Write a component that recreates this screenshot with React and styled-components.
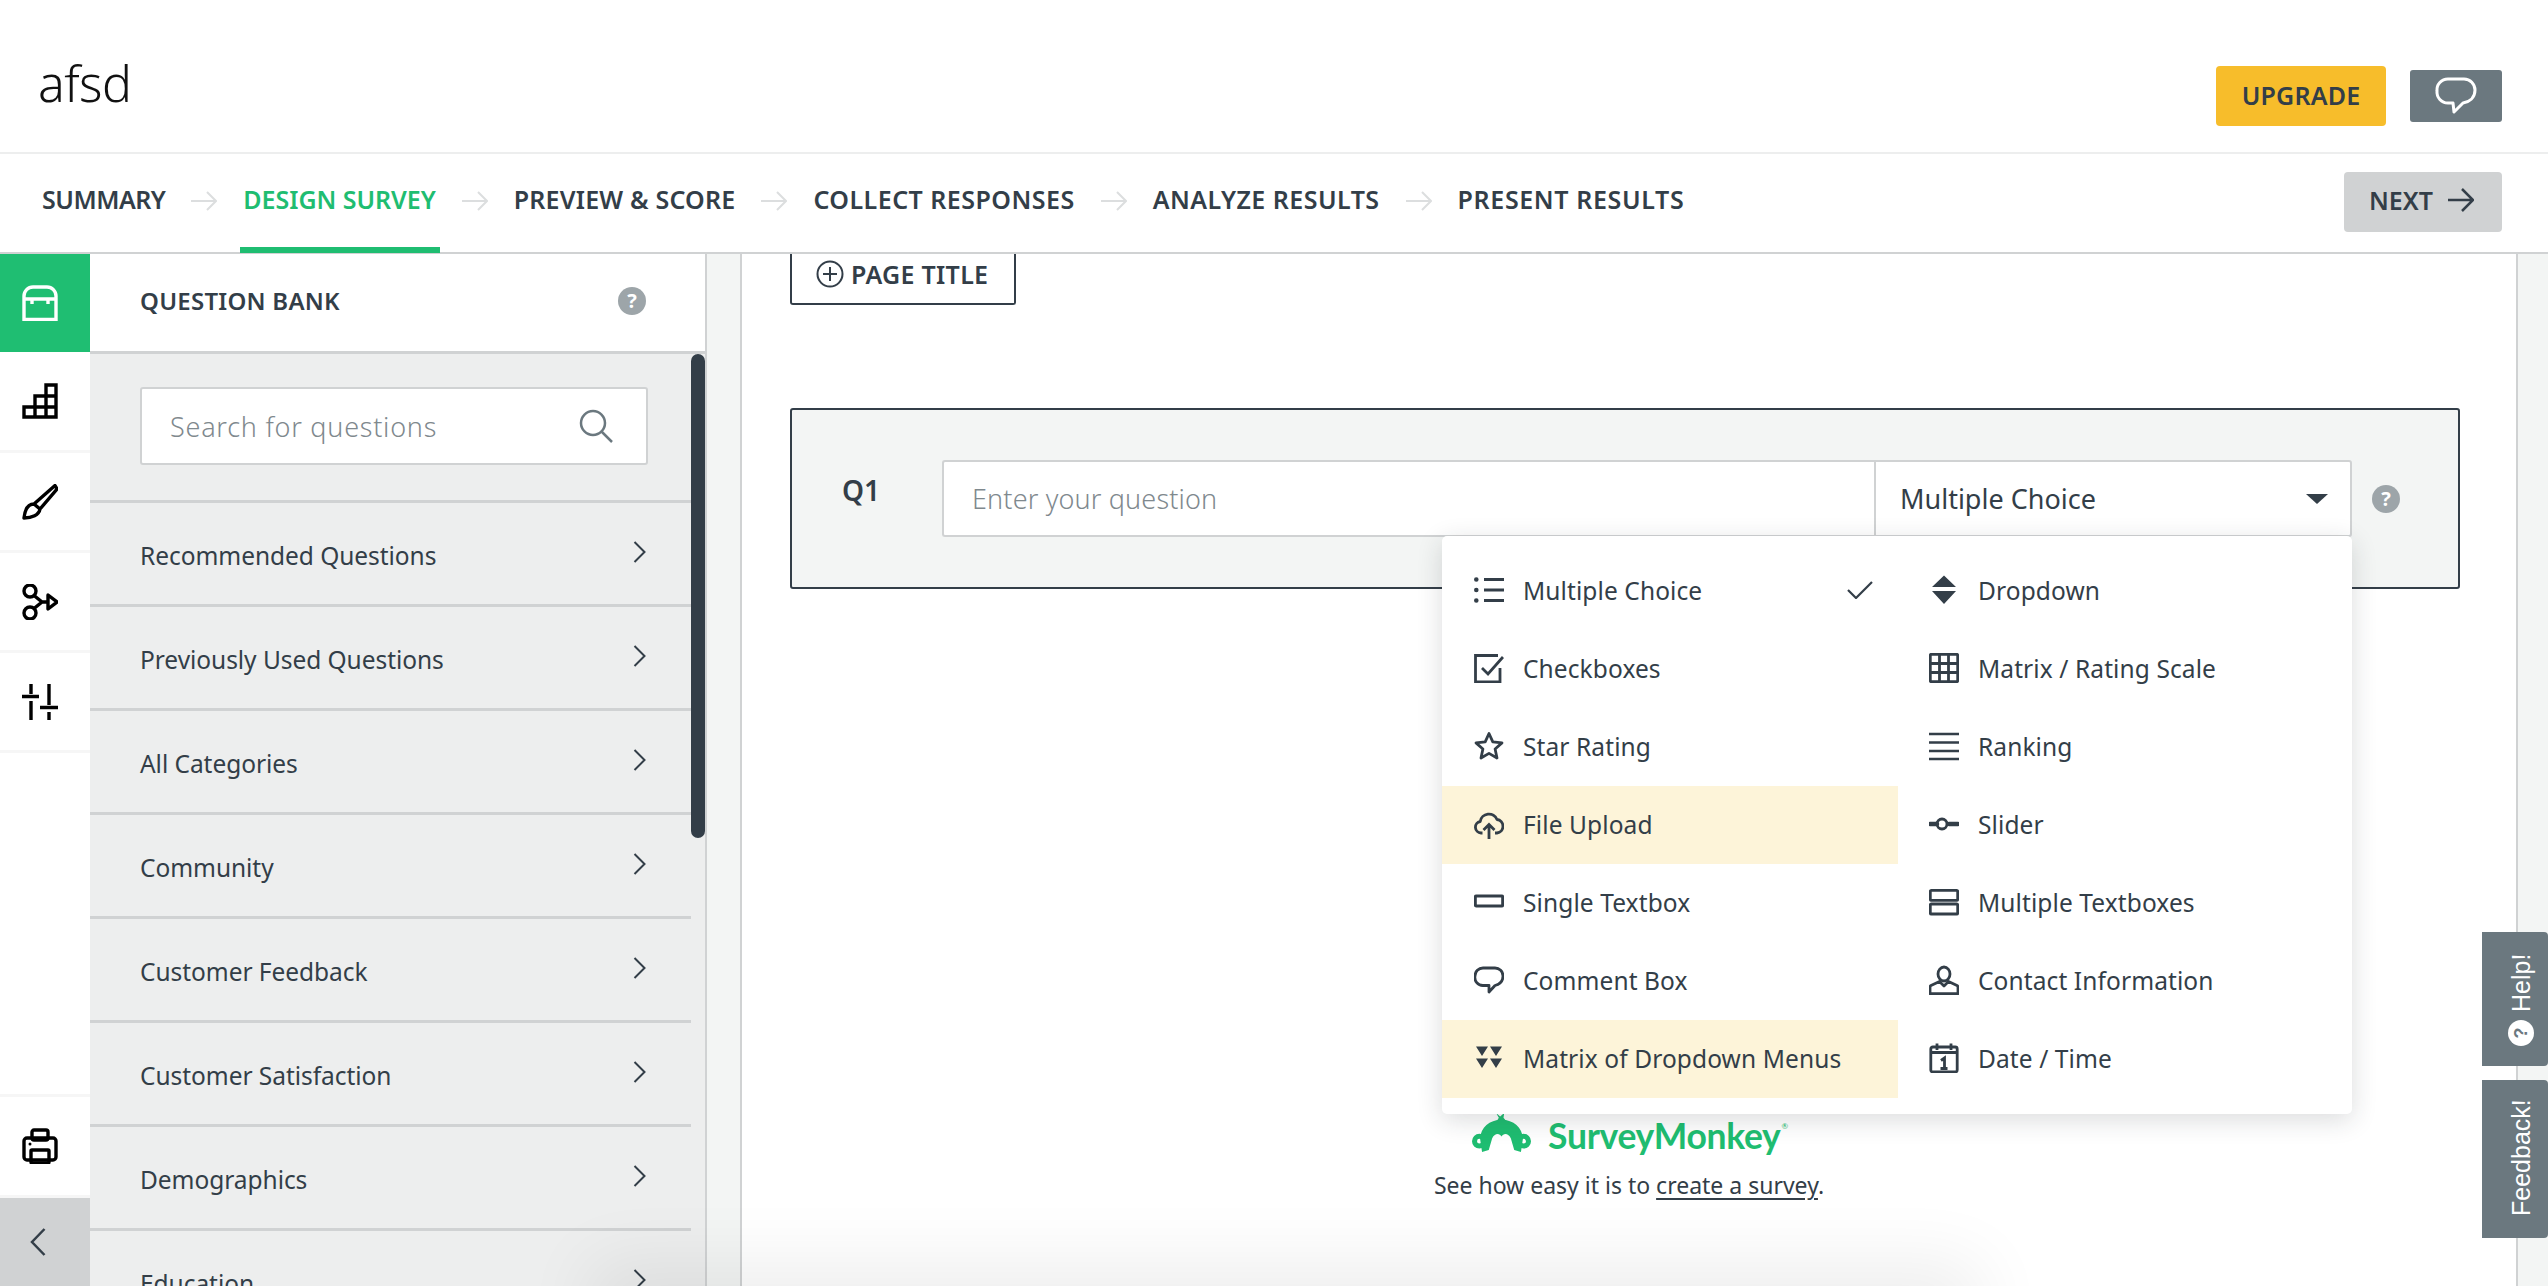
import React from "react";
import styled, { createGlobalStyle } from "styled-components";

const Global = createGlobalStyle`
  html, body { margin: 0; padding: 0; height: 100%; overflow: hidden; background: #fff; }
  * { box-sizing: border-box; }
  #root { height: 100%; }
`;
const INK = "#333e48";
const LINE = "#d0d2d3";
const SANS = `"Noto Sans", "Open Sans", sans-serif`;

const Page = styled.div`
  position: relative; width: 2548px; height: 1286px; overflow: hidden;
  display: flex; flex-direction: column; font-family: ${SANS}; color: ${INK}; background: #fff;
`;
const Header = styled.header`
  flex: none; height: 154px; border-bottom: 2px solid #edeeee;
  display: flex; align-items: flex-start; justify-content: space-between; padding: 0 46px 0 38px;
`;
const Title = styled.h1`
  margin: 50px 0 0; font-size: 50px; line-height: 66px; font-weight: 300; color: #111; letter-spacing: -0.6px;
`;
const HeaderActions = styled.div`
  display: flex; align-items: center; gap: 24px; margin-top: 66px;
`;
const UpgradeButton = styled.div`
  width: 170px; height: 60px; border-radius: 4px; background: #f7bd2b; color: ${INK};
  display: flex; align-items: center; justify-content: center; padding-bottom: 3px;
  font-size: 25px; font-weight: 600; letter-spacing: .2px;
`;
const ChatButton = styled.div`
  width: 92px; height: 52px; border-radius: 3px; background: #6b787f;
  display: flex; align-items: center; justify-content: center;
`;
const Nav = styled.nav`
  position: relative; flex: none; height: 100px; border-bottom: 2px solid ${LINE};
  display: flex; align-items: center; padding: 0 46px 0 42px;
`;
const Step = styled.div`
  position: relative; font-size: 25px; font-weight: 600; line-height: 36px; white-space: nowrap;
  color: ${p => (p.$active ? "#1fbd71" : INK)}; letter-spacing: ${p => p.$ls};
  margin-top: -9px;
  &::after {
    content: ""; display: ${p => (p.$active ? "block" : "none")}; position: absolute;
    left: -3px; right: -4px; bottom: -36px; height: 6px; background: #1fbd71;
  }
`;
const StepArrow = styled.svg`
  flex: none; width: 26px; height: 20px; margin: -5px 26px 0 26px; fill: none; stroke: #dcdedf; stroke-width: 2;
`;
const NextButton = styled.div`
  margin-left: auto; width: 158px; height: 60px; border-radius: 4px; background: ${LINE};
  display: flex; align-items: center; gap: 15px; padding: 0 0 5px 25px; margin-top: -2px;
  font-size: 25px; font-weight: 600;
`;
const Body = styled.div`
  flex: 1; min-height: 0; display: flex;
`;
const Rail = styled.aside`
  flex: none; width: 90px; display: flex; flex-direction: column; background: #fff;
`;
const RailItem = styled.div`
  flex: none; height: ${p => p.$h || "100px"}; display: flex; align-items: center; padding-left: 22px;
  background: ${p => (p.$active ? "#1fbe72" : "#fff")};
  border-bottom: ${p => (p.$active ? "none" : "3px solid #f6f6f6")};
`;
const RailSpacer = styled.div`
  flex: 1; border-bottom: 3px solid #f6f6f6;
`;
const Collapse = styled.div`
  flex: none; height: 88px; background: ${LINE}; display: flex; align-items: center; padding: 0 0 0 30px;
`;
const Bank = styled.section`
  flex: none; width: 617px; border-right: 2px solid ${LINE}; background: #edeeee;
  display: flex; flex-direction: column; position: relative; overflow: hidden;
`;
const BankHead = styled.div`
  flex: none; height: 100px; background: #fff; border-bottom: 3px solid ${LINE};
  display: flex; align-items: center; justify-content: space-between; padding: 0 59px 4px 50px;
  font-size: 24px; font-weight: 600; letter-spacing: .25px;
`;
const HelpDot = styled.span`
  width: 28px; height: 28px; border-radius: 50%; background: ${p => p.$bg || "#9da5a9"}; color: ${p => p.$fg || "#fff"};
  display: inline-flex; align-items: center; justify-content: center; flex: none;
  font-size: 20px; font-weight: 700; line-height: 1; letter-spacing: 0;
`;
const SearchWrap = styled.div`
  flex: none; height: 149px; padding: 33px 44px 0 50px; margin-right: 14px; border-bottom: 3px solid ${LINE};
`;
const SearchField = styled.div`
  height: 78px; width: 508px; background: #fff; border: 2px solid ${LINE}; border-radius: 3px;
  display: flex; align-items: center; justify-content: space-between; padding: 0 33px 0 28px;
  font-size: 27px; font-weight: 300; color: #7f898e; letter-spacing: .75px;
`;
const BankRow = styled.div`
  flex: none; height: 104px; margin-right: 14px; padding: 0 45px 0 50px; border-bottom: 3px solid ${LINE};
  display: flex; align-items: center; justify-content: space-between;
  font-size: 24.500px; font-weight: 400; color: ${INK}; letter-spacing: -.05px;
`;
const RowLabel = styled.span`
  margin-top: 4px;
`;
const RowChevron = styled.span`
  display: flex; margin-top: -3px;
`;
const Scrollbar = styled.div`
  position: absolute; top: 100px; right: 0; width: 14px; height: 484px; border-radius: 7px; background: ${INK};
`;
const Gutter = styled.div`
  flex: none; width: ${p => p.$w}; background: #f3f5f4;
  border-right: ${p => (p.$right ? `2px solid ${LINE}` : "none")};
  border-left: ${p => (p.$left ? `2px solid ${LINE}` : "none")};
`;
const Canvas = styled.main`
  flex: 1; min-width: 0; padding: 0 56px 0 48px; background: #fff;
`;
const PageTitle = styled.div`
  width: 226px; height: 51px; border: 2px solid ${INK}; border-top: none; border-radius: 0 0 3px 3px;
  display: flex; align-items: center; gap: 7px; padding: 0 0 10px 24px;
  font-size: 25px; font-weight: 600; letter-spacing: .3px;
`;
const QuestionCard = styled.div`
  position: relative; margin-top: 103px; height: 181px; background: #f3f5f4;
  border: 2px solid ${INK}; border-radius: 3px; display: flex; align-items: center; padding: 0 0 0 50px;
`;
const QLabel = styled.div`
  width: 100px; font-size: 28px; font-weight: 600; margin-top: -18px;
`;
const QuestionInput = styled.div`
  width: 932px; height: 77px; background: #fff; border: 2px solid ${LINE}; border-right: none; border-radius: 3px 0 0 3px;
  display: flex; align-items: center; padding-left: 28px; font-size: 27px; font-weight: 300; color: #7f898e; letter-spacing: .15px;
`;
const TypeSelect = styled.div`
  width: 478px; height: 77px; background: #fff; border: 2px solid ${LINE}; border-radius: 0 3px 3px 0;
  display: flex; align-items: center; justify-content: space-between; padding: 0 22px 0 24px; font-size: 27px;
`;
const Caret = styled.span`
  width: 0; height: 0; border-left: 11px solid transparent; border-right: 11px solid transparent; border-top: 10px solid ${INK};
`;
const CardHelp = styled.div`
  margin-left: 20px;
`;
const Menu = styled.div`
  position: absolute; top: 126px; left: 650px; width: 910px; height: 578px; padding: 16px 0; z-index: 5;
  background: #fff; border-radius: 5px; box-shadow: 0 6px 26px rgba(30, 40, 45, .16);
  display: grid; grid-template-columns: 456px 454px; grid-auto-rows: 78px;
`;
const MenuItem = styled.div`
  display: flex; align-items: center; padding: 0 25px 2px 32px; gap: 19px;
  background: ${p => (p.$hl ? "#fdf4d9" : "transparent")}; font-size: 24.500px; font-weight: 400; letter-spacing: .1px; color: ${INK};
  &:nth-child(even) { padding-left: 31px; }
`;
const CheckMark = styled.svg`
  margin-left: auto; width: 26px; height: 18px; fill: none; stroke: ${INK}; stroke-width: 2.2;
`;
const Promo = styled.div`
  margin-top: 524px; padding-left: 8px; display: flex; flex-direction: column; align-items: center;
`;
const Brand = styled.div`
  display: flex; align-items: flex-start; gap: 17px; height: 50px; padding-left: 2px; font-family: Lato, "Noto Sans", sans-serif;
  font-size: 35.500px; font-weight: 700; line-height: 46px; color: #1fbd71; letter-spacing: -.3px;
`;
const Reg = styled.sup`
  font-size: 8px; line-height: 8px; vertical-align: 20px; margin-left: 1px; font-weight: 400;
`;
const Tagline = styled.p`
  margin: 4px 0 0; font-size: 23px; line-height: 36px; color: ${INK};
`;
const Link = styled.span`
  text-decoration: underline; text-underline-offset: 4px;
`;
const BottomGlow = styled.div`
  position: absolute; left: 620px; width: 1330px; height: 30px; bottom: -36px; pointer-events: none;
  box-shadow: 0 0 70px 30px rgba(0, 0, 0, .07); background: rgba(0,0,0,.07);
`;
const SideTabs = styled.div`
  position: absolute; top: 932px; right: 0; width: 66px; display: flex; flex-direction: column; gap: 14px; z-index: 6;
`;
const SideTab = styled.div`
  height: ${p => p.$h}; background: #6b787f; border-radius: 4px 0 0 4px; color: #fff;
  writing-mode: vertical-rl; transform: rotate(180deg); display: flex; align-items: center; gap: 8px;
  padding: ${p => p.$pad} 12px 0 0;
  font-family: "Liberation Sans", Arial, sans-serif; font-size: 25px; line-height: 30px;
`;
const TabHelp = styled(HelpDot)`
  width: 26px; height: 26px; font-size: 18px; transform: rotate(90deg);
  writing-mode: horizontal-tb;
`;
const Ico = styled.svg`
  flex: none; width: ${p => p.$w || 30}px; height: ${p => p.$h || 30}px; fill: none;
  stroke: ${p => p.$c || INK}; stroke-width: ${p => p.$sw || 2.8}; color: ${p => p.$c || INK};
`;

const I = ({ w, h, c, sw, vb, children }) => (
  <Ico $w={w} $h={h} $c={c} $sw={sw} viewBox={vb || `0 0 ${w || 30} ${h || 30}`}>{children}</Ico>
);
const Rail36 = ({ c = "#000", children }) => <I w={36} h={36} c={c} sw={3.4}>{children}</I>;
const Chevron = () => <RowChevron><I w={13} h={22} sw={2}><path d="M1.500 1 L11.500 11 L1.500 21" /></I></RowChevron>;
const Solid = p => <path fill="currentColor" stroke="none" {...p} />;

const icons = {
  list: <I><Solid d="M0 4.500a2.300 2.300 0 1 0 4.600 0a2.300 2.300 0 1 0-4.600 0M0 15a2.300 2.300 0 1 0 4.600 0a2.300 2.300 0 1 0-4.600 0M0 25.500a2.300 2.300 0 1 0 4.600 0a2.300 2.300 0 1 0-4.600 0" /><path d="M10 4.500h20M10 15h20M10 25.500h20" /></I>,
  check: <I><path d="M26 15v14H1.500V2.500H24" /><path d="M8 15l6 6L29 4" /></I>,
  star: <I><path d="M15 2.500l3.800 8.400 9.200 1-6.900 6.100 1.900 9-8-4.600-8 4.600 1.900-9L2 11.900l9.200-1z" strokeLinejoin="round" /></I>,
  cloud: <I><path d="M8.500 24H7A5.800 5.800 0 0 1 6.200 12.500 8.800 8.800 0 0 1 23 10.500a6.800 6.800 0 0 1 0 13.500h-2" strokeLinejoin="round" /><path d="M15 30V16M9.500 21l5.500-5.500 5.500 5.500" /></I>,
  box: <I><rect x="1.300" y="9" width="27.400" height="10" rx="1" strokeWidth="3" /></I>,
  comment: <I><path d="M9 3h12a8 8 0 0 1 8 8c0 6-4 8.500-8 9.500l-6 6.500v-6.500H9a8 8 0 0 1-8-9.500a8 8 0 0 1 8-8z" strokeLinejoin="round" /></I>,
  matrixDd: <I><Solid d="M2 3.500h12l-6 9.500zM16 3.500h12l-6 9.500zM2 15.500h12l-6 9.500zM16 15.500h12l-6 9.500z" /></I>,
  dropdown: <I><Solid d="M15 .5L27 12H3zM3 16h24L15 29z" /></I>,
  grid: <I><rect x="1.300" y="1.300" width="27.400" height="27.400" rx="1" /><path d="M10.500 1v28M19.500 1v28M1 10.500h28M1 19.500h28" /></I>,
  rank: <I sw={2.500}><path d="M0 3h30M0 11.500h30M0 20h30M0 28h30" /></I>,
  slider: <I><path d="M1 15h7M20 15h9" strokeWidth="4.500" strokeLinecap="round" /><circle cx="13" cy="15" r="5" /></I>,
  boxes: <I><rect x="1.300" y="3.300" width="27.400" height="10" rx="1" /><rect x="1.300" y="17" width="27.400" height="10" rx="1" /></I>,
  contact: <I><ellipse cx="15" cy="9" rx="6" ry="7" /><path d="M10.500 16.500L2 20.500q-1 .5-1 2V28.700h28V22.500q0-1.500-1-2L19.500 16.500L15 21z" strokeLinejoin="round" /></I>,
  date: <I><rect x="1.800" y="4" width="26.400" height="25" rx="2" /><path d="M8 .5V7M22 .5V7M2 9.500h26" /><path d="M12 17.500l3.500-2.500V25.500M11.500 25.500h7" /></I>,
};

const questions = ["Recommended Questions", "Previously Used Questions", "All Categories", "Community", "Customer Feedback", "Customer Satisfaction", "Demographics", "Education"];
const types = [
  ["list", "Multiple Choice"], ["dropdown", "Dropdown"],
  ["check", "Checkboxes"], ["grid", "Matrix / Rating Scale"],
  ["star", "Star Rating"], ["rank", "Ranking"],
  ["cloud", "File Upload", true], ["slider", "Slider"],
  ["box", "Single Textbox"], ["boxes", "Multiple Textboxes"],
  ["comment", "Comment Box"], ["contact", "Contact Information"],
  ["matrixDd", "Matrix of Dropdown Menus", true], ["date", "Date / Time"],
];
const steps = [
  ["SUMMARY", false, "-.5px"], ["DESIGN SURVEY", true, "-.05px"], ["PREVIEW & SCORE", false, ".2px"],
  ["COLLECT RESPONSES", false, ".48px"], ["ANALYZE RESULTS", false, ".47px"], ["PRESENT RESULTS", false, ".63px"],
];

const MonkeyLogo = () => (
  <svg width="59" height="41" viewBox="0 0 176 122" style={{ flex: "none" }}>
    <g fill="#1fbd71">
      <path d="M72 0l12 10L96 0l-2 14 8 10H74l6-10z" />
      <path fillRule="evenodd" d="M22 62a22 22 0 1 0 0 44a22 22 0 1 0 0-44zm0 15a7 7 0 1 1 0 14a7 7 0 1 1 0-14zM154 62a22 22 0 1 0 0 44a22 22 0 1 0 0-44zm0 15a7 7 0 1 1 0 14a7 7 0 1 1 0-14z" />
      <path d="M30 116l20 -6q6-20 10-34c6-16 22-18 28-6c6-12 22-10 28 6q4 14 10 34l20 6l6-40C150 44 124 20 88 20S26 44 24 76z" />
    </g>
  </svg>
);

export default function App() {
  return (
    <Page>
      <Global />
      <Header>
        <Title>afsd</Title>
        <HeaderActions>
          <UpgradeButton>UPGRADE</UpgradeButton>
          <ChatButton>
            <I w={42} h={38} c="#fff" sw={3}><path d="M13 2h16a11 11 0 0 1 11 11c0 8-6 12-12 13l-9 9l-1-9h-5a11 11 0 0 1-11-12a11 11 0 0 1 11-12z" strokeLinejoin="round" /></I>
          </ChatButton>
        </HeaderActions>
      </Header>
      <Nav>
        {steps.map(([s, a, ls], i) => (
          <React.Fragment key={s}>
            {i > 0 && <StepArrow viewBox="0 0 26 20"><path d="M0 10h25M16 1l9 9-9 9" /></StepArrow>}
            <Step $active={a} $ls={ls}>{s}</Step>
          </React.Fragment>
        ))}
        <NextButton>NEXT <I w={26} h={24} sw={2.500}><path d="M0 12h25M14 1l11 11-11 11" /></I></NextButton>
      </Nav>
      <Body>
        <Rail>
          <RailItem $active $h="98px">
            <Rail36 c="#fff"><path d="M2 34.500V11a9 9 0 0 1 9-9h14a9 9 0 0 1 9 9v23.500zM2 14h32M10 14v5M26 14v5" /></Rail36>
          </RailItem>
          <RailItem $h="101px"><Rail36><path d="M2 34V24h32V34zM13 34V13h21V24M2 24h11M24 34V2h10V13M13 13h11" /></Rail36></RailItem>
          <RailItem><Rail36><path d="M33 1.500l2 3.500-17 20-6-5zM12 20c-6 0-9 5-10 14 8 0 15-3 16-9" strokeLinejoin="round" /></Rail36></RailItem>
          <RailItem><Rail36><circle cx="8" cy="7" r="6" /><circle cx="8" cy="29" r="6" /><path d="M12 11.500L20 18l-8 6.500M20 18h5" /><path d="M26 11l9 7-9 7z" strokeLinejoin="round" /></Rail36></RailItem>
          <RailItem><Rail36><path d="M9 0v10M0 12.500h17M9 17v19M27 0v21M18 23.500h18M27 28v8" /></Rail36></RailItem>
          <RailSpacer />
          <RailItem $h="101px"><Rail36><rect x="10" y="2" width="16" height="10" rx="2" /><rect x="2" y="10" width="32" height="22" rx="3" /><rect x="9" y="22" width="18" height="13" rx="1" /><circle cx="8" cy="16" r="1.500" fill="#000" stroke="none" /></Rail36></RailItem>
          <Collapse><I w={16} h={28} sw={2.500}><path d="M14.500 1L2 14l12.500 13" /></I></Collapse>
        </Rail>
        <Bank>
          <BankHead>QUESTION BANK <HelpDot>?</HelpDot></BankHead>
          <SearchWrap>
            <SearchField>
              <span>Search for questions</span>
              <I w={34} h={34} c="#6b787f" sw={2.500}><circle cx="14" cy="14" r="12" /><path d="M22.500 22.500L33 33" /></I>
            </SearchField>
          </SearchWrap>
          {questions.map(q => (
            <BankRow key={q}><RowLabel>{q}</RowLabel><Chevron /></BankRow>
          ))}
          <Scrollbar />
        </Bank>
        <Gutter $w="35px" $right />
        <Canvas>
          <PageTitle>
            <I w={28} h={28} sw={2}><circle cx="14" cy="14" r="12.500" /><path d="M14 7v14M7 14h14" /></I>
            PAGE TITLE
          </PageTitle>
          <QuestionCard>
            <QLabel>Q1</QLabel>
            <QuestionInput>Enter your question</QuestionInput>
            <TypeSelect>Multiple Choice<Caret /></TypeSelect>
            <CardHelp><HelpDot>?</HelpDot></CardHelp>
            <Menu>
              {types.map(([ic, label, hl], i) => (
                <MenuItem key={label} $hl={hl}>
                  {icons[ic]}
                  {label}
                  {i === 0 && <CheckMark viewBox="0 0 26 18"><path d="M1 9l8 8L25 1" /></CheckMark>}
                </MenuItem>
              ))}
            </Menu>
          </QuestionCard>
          <Promo>
            <Brand><MonkeyLogo /><span>SurveyMonkey<Reg>®</Reg></span></Brand>
            <Tagline>See how easy it is to <Link>create a survey</Link>.</Tagline>
          </Promo>
        </Canvas>
        <Gutter $w="32px" $left />
      </Body>
      <BottomGlow />
      <SideTabs>
        <SideTab $h="134px" $pad="20px"><TabHelp $bg="#fff" $fg="#6b787f">?</TabHelp>Help!</SideTab>
        <SideTab $h="158px" $pad="22px">Feedback!</SideTab>
      </SideTabs>
    </Page>
  );
}
